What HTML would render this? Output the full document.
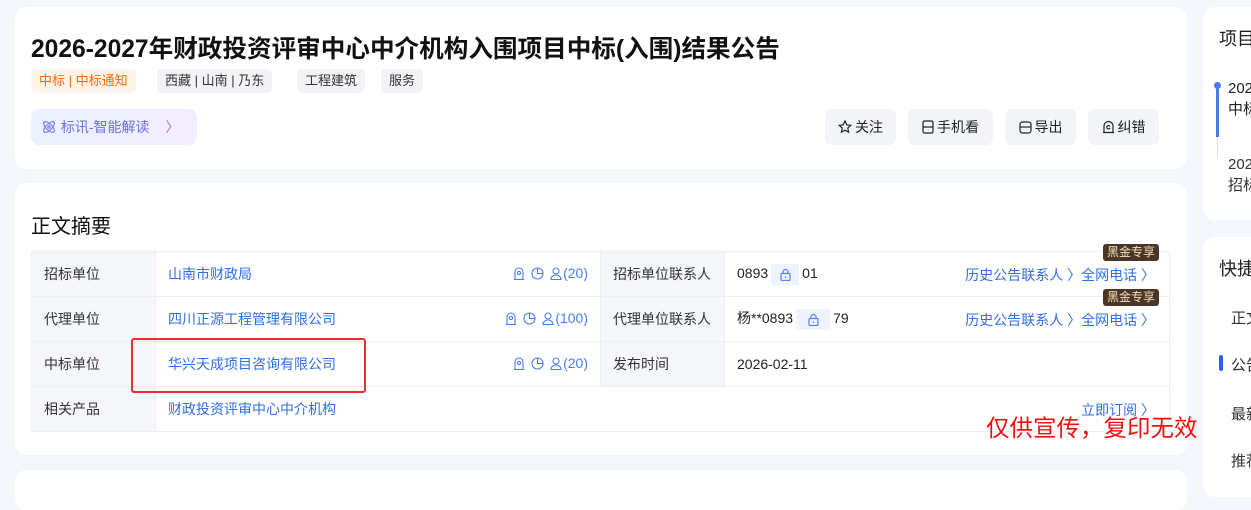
<!DOCTYPE html>
<html><head><meta charset="utf-8"><style>
*{margin:0;padding:0;box-sizing:border-box}
body{width:1251px;height:488px;overflow:hidden;background:#f3f6fb;font-family:"Liberation Sans","Noto Sans CJK SC",sans-serif;position:relative;color:#222}
.card{position:absolute;background:#fff;border-radius:12px}
.abs{position:absolute;white-space:nowrap}
.tag{position:absolute;top:69px;height:24px;line-height:24px;font-size:13px;padding:0 8px;border-radius:4px;background:#f2f3f7;color:#333}
.btn{position:absolute;top:109px;height:36px;line-height:36px;border-radius:7px;background:#f3f4f8;font-size:14px;color:#222;text-align:center}
.btn svg{vertical-align:-2px;margin-right:3px}
table{position:absolute;left:31px;top:251px;border-collapse:collapse;font-size:14px}
td{border:1px solid #eceef2;height:45px;padding:0 12px;position:relative}
td.l{background:#f5f6fa;color:#333;width:124px}
.blue{color:#2f6fe8}
.ic{position:absolute;color:#4a7cf0;font-size:14px;top:13px}
.ic svg{vertical-align:-2px;margin-right:6px}
.lock{display:inline-block;width:28px;height:21px;background:#eef3ff;vertical-align:middle;margin:0 3px;text-align:center}
.lock svg{margin-top:4px}
.vip{position:absolute;right:10px;background:#4a3526;color:#f7e0b8;font-size:12px;padding:0 4px;height:17px;line-height:17px;border-radius:3px}
</style></head><body>
<div class="card" style="left:15px;top:7px;width:1172px;height:162px"></div>
<div class="abs" style="left:31px;top:29px;font-size:24.6px;font-weight:bold;color:#111">2026-2027年财政投资评审中心中介机构入围项目中标(入围)结果公告</div>
<div class="tag" style="left:31px;background:#fff4ea;color:#ff6a00">中标 | 中标通知</div>
<div class="tag" style="left:157px">西藏 | 山南 | 乃东</div>
<div class="tag" style="left:297px">工程建筑</div>
<div class="tag" style="left:381px">服务</div>
<div class="abs" style="left:31px;top:109px;width:166px;height:36px;border-radius:8px;background:linear-gradient(90deg,#eaf2ff,#f3ecff);font-size:14px;line-height:36px;color:#6a70e0;padding-left:10px"><svg width="16" height="16" viewBox="0 0 16 16" style="vertical-align:-3px" fill="none" stroke="#7a80e8" stroke-width="1.2"><ellipse cx="8" cy="8" rx="7" ry="3" transform="rotate(45 8 8)"/><ellipse cx="8" cy="8" rx="7" ry="3" transform="rotate(-45 8 8)"/><circle cx="8" cy="8" r="1.2"/></svg> 标讯-智能解读 <span style="margin-left:12px;color:#9a70f0">〉</span></div>
<div class="btn" style="left:825px;width:71px"><svg width="14" height="14" viewBox="0 0 14 14" fill="none" stroke="#222" stroke-width="1.2"><path d="M7 1l1.8 3.8 4 .5-3 2.8.8 4L7 10.2 3.4 12.1l.8-4-3-2.8 4-.5z"/></svg>关注</div>
<div class="btn" style="left:908px;width:85px"><svg width="12" height="14" viewBox="0 0 12 14" fill="none" stroke="#222" stroke-width="1.2"><rect x="1" y="1" width="10" height="12" rx="1.5"/><path d="M1 7h10M6 10h.1"/></svg>手机看</div>
<div class="btn" style="left:1005px;width:71px"><svg width="13" height="13" viewBox="0 0 13 13" fill="none" stroke="#222" stroke-width="1.2"><rect x="1" y="1" width="11" height="11" rx="2.5"/><path d="M1 6h11"/></svg>导出</div>
<div class="btn" style="left:1088px;width:71px"><svg width="13" height="14" viewBox="0 0 13 14" fill="none" stroke="#222" stroke-width="1.2"><path d="M2 12V6a4.5 4.5 0 019 0v6M1 12.5h11M8 6.5a1.7 1.7 0 10 0 1.5"/></svg>纠错</div>

<div class="card" style="left:15px;top:183px;width:1172px;height:272px"></div>
<div class="abs" style="left:31px;top:210px;font-size:20px;color:#111">正文摘要</div>
<table>
<tr><td class="l">招标单位</td><td style="width:445px"><span class="blue">山南市财政局</span><span class="ic" style="right:12px"><svg width="12" height="13" viewBox="0 0 12 13" fill="none" stroke="#4a7cf0" stroke-width="1.1"><path d="M2 12V5a4 4 0 018 0v7M1 12.5h10"/><circle cx="6" cy="6" r="1.6"/></svg><svg width="13" height="13" viewBox="0 0 13 13" fill="none" stroke="#4a7cf0" stroke-width="1.1"><circle cx="6.5" cy="6.5" r="5.5"/><path d="M6.5 1v5.5H12"/></svg><svg width="12" height="13" viewBox="0 0 12 13" fill="none" stroke="#4a7cf0" stroke-width="1.1" style="margin-right:1px"><circle cx="6" cy="4" r="3"/><path d="M1 12.5a5 4.5 0 0110 0z"/></svg>(20)</span></td><td class="l">招标单位联系人</td><td style="width:445px">0893<span class="lock"><svg width="11" height="13" viewBox="0 0 11 13" fill="none" stroke="#5a82f0" stroke-width="1.2"><rect x="1" y="5.5" width="9" height="7" rx="1"/><path d="M3 5.5V4a2.5 2.5 0 015 0v1.5M5.5 8.5v1.5"/></svg></span>01<span class="abs blue" style="right:14px;top:13px">历史公告联系人 〉全网电话 〉</span><span class="vip" style="top:-8px">黑金专享</span></td></tr>
<tr><td class="l">代理单位</td><td><span class="blue">四川正源工程管理有限公司</span><span class="ic" style="right:12px"><svg width="12" height="13" viewBox="0 0 12 13" fill="none" stroke="#4a7cf0" stroke-width="1.1"><path d="M2 12V5a4 4 0 018 0v7M1 12.5h10"/><circle cx="6" cy="6" r="1.6"/></svg><svg width="13" height="13" viewBox="0 0 13 13" fill="none" stroke="#4a7cf0" stroke-width="1.1"><circle cx="6.5" cy="6.5" r="5.5"/><path d="M6.5 1v5.5H12"/></svg><svg width="12" height="13" viewBox="0 0 12 13" fill="none" stroke="#4a7cf0" stroke-width="1.1" style="margin-right:1px"><circle cx="6" cy="4" r="3"/><path d="M1 12.5a5 4.5 0 0110 0z"/></svg>(100)</span></td><td class="l">代理单位联系人</td><td>杨**0893<span class="lock" style="width:34px"><svg width="11" height="13" viewBox="0 0 11 13" fill="none" stroke="#5a82f0" stroke-width="1.2"><rect x="1" y="5.5" width="9" height="7" rx="1"/><path d="M3 5.5V4a2.5 2.5 0 015 0v1.5M5.5 8.5v1.5"/></svg></span>79<span class="abs blue" style="right:14px;top:13px">历史公告联系人 〉全网电话 〉</span><span class="vip" style="top:-8px">黑金专享</span></td></tr>
<tr><td class="l">中标单位</td><td><span class="blue">华兴天成项目咨询有限公司</span><span class="ic" style="right:12px"><svg width="12" height="13" viewBox="0 0 12 13" fill="none" stroke="#4a7cf0" stroke-width="1.1"><path d="M2 12V5a4 4 0 018 0v7M1 12.5h10"/><circle cx="6" cy="6" r="1.6"/></svg><svg width="13" height="13" viewBox="0 0 13 13" fill="none" stroke="#4a7cf0" stroke-width="1.1"><circle cx="6.5" cy="6.5" r="5.5"/><path d="M6.5 1v5.5H12"/></svg><svg width="12" height="13" viewBox="0 0 12 13" fill="none" stroke="#4a7cf0" stroke-width="1.1" style="margin-right:1px"><circle cx="6" cy="4" r="3"/><path d="M1 12.5a5 4.5 0 0110 0z"/></svg>(20)</span></td><td class="l">发布时间</td><td>2026-02-11</td></tr>
<tr><td class="l" style="height:44px">相关产品</td><td colspan="3"><span class="blue">财政投资评审中心中介机构</span><span class="abs blue" style="right:14px;top:13px">立即订阅 〉</span></td></tr>
</table>
<div class="abs" style="left:131px;top:338px;width:235px;height:55px;border:2px solid #e8312e;border-radius:3px"></div>
<div class="abs" style="left:986px;top:409px;font-size:23.5px;color:#f01010">仅供宣传，复印无效</div>

<div class="card" style="left:15px;top:470px;width:1172px;height:40px"></div>

<div class="card" style="left:1203px;top:7px;width:60px;height:213px"></div>
<div class="abs" style="left:1219px;top:25px;font-size:18px">项目</div>
<div class="abs" style="left:1216px;top:85px;width:3px;height:52px;background:#4a7cf0"></div>
<div class="abs" style="left:1214px;top:82px;width:7px;height:7px;border-radius:50%;background:#4a7cf0"></div>
<div class="abs" style="left:1217px;top:137px;width:1px;height:22px;background:#ddd"></div>
<div class="abs" style="left:1228px;top:78px;font-size:15px;line-height:21px">202<br>中标</div>
<div class="abs" style="left:1228px;top:154px;font-size:15px;line-height:21px;color:#333">202<br>招标</div>
<div class="card" style="left:1203px;top:237px;width:60px;height:260px"></div>
<div class="abs" style="left:1219px;top:255px;font-size:18px">快捷</div>
<div class="abs" style="left:1231px;top:307px;font-size:15px;color:#333">正文</div>
<div class="abs" style="left:1219px;top:355px;width:4px;height:16px;background:#2a63f0;border-radius:2px"></div>
<div class="abs" style="left:1231px;top:354px;font-size:15px;color:#333">公告</div>
<div class="abs" style="left:1231px;top:403px;font-size:15px;color:#333">最新</div>
<div class="abs" style="left:1231px;top:450px;font-size:15px;color:#333">推荐</div>
</body></html>
